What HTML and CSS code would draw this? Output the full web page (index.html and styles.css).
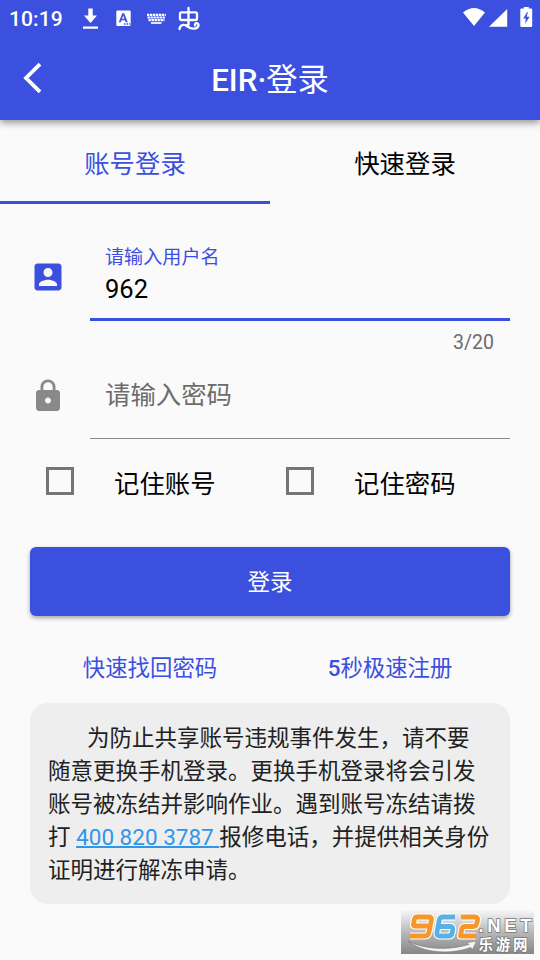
FILE: index.html
```html
<!DOCTYPE html>
<html lang="zh-CN">
<head>
<meta charset="utf-8">
<title>EIR·登录</title>
<link rel="stylesheet" href="styles.css">
</head>
<body>
<header class="header">
  <div class="status">
    <span class="clock">10:19</span>
    <svg class="status-left" width="126" height="36" viewBox="0 0 126 36" fill="#fff">
      <path d="M10.300 8.500h4.400v7h4.300l-6.500 7.500-6.500-7.500h4.300zM5 26.500h15v2.200H5z"/>
      <path fill-rule="evenodd" d="M39.500 10.500h12q1.200 0 1.200 1.200v13q0 1.200-1.200 1.200h-12q-1.200 0-1.200-1.200v-13q0-1.200 1.200-1.200zM44.300 13.200l-3.500 9h2l.7-2h3.500l.7 2h2l-3.500-9zm.9 2.400l1.200 3.200H44z"/>
      <path d="M46 23.300h1.500v1.500H46zM48.500 23.300h1.500v1.500h-1.500zM51 23.300h1.200v1.500H51z" fill="#3b50df"/>
      <path d="M69 14.800h18.800M69.500 17.500h17.800M70.500 20.200h16" fill="none" stroke="#fff" stroke-width="2.200" stroke-dasharray="2.400 .6"/>
      <path d="M73 23h10.500" stroke="#fff" stroke-width="1.700"/>
      <g fill="none" stroke="#fff" stroke-width="2.300" stroke-linecap="round" stroke-linejoin="round">
        <path d="M103.500 12.300h14q1.500 0 1.500 1.500v4.700q0 1.500-1.500 1.500h-14q-1.500 0-1.500-1.500v-4.700q0-1.500 1.500-1.500zM110.500 8v16.500"/>
        <path d="M101.500 29c.5-4 4-5.500 8-2.500 4.500 3.500 11 2.500 11-1.500 0-2.700-4-2.500-3.500.3M110.500 24.500l-2.500 1"/>
      </g>
    </svg>
    <svg class="status-right" width="72" height="36" viewBox="0 0 72 36" fill="#fff">
      <path d="M1 12.500Q12 3.500 23 12.500L12 26zM27 26.700L45.200 9v17.700z"/>
      <path fill-rule="evenodd" d="M59.500 8.500h2.300V7h5v1.500H69q1.200 0 1.200 1.200v16q0 1.200-1.200 1.200h-9.500q-1.200 0-1.200-1.200v-16q0-1.200 1.200-1.200zM65.200 12l-4 6.500h2.700l-.8 5.300 4.500-7h-2.900l1.200-4.800z"/>
    </svg>
  </div>
  <div class="appbar">
    <svg class="back" width="24" height="32" viewBox="0 0 24 32"><path d="M20 2.200L6 16l14 13.800" fill="none" stroke="#fff" stroke-width="3.800"/></svg>
    <h1 class="title">EIR·<span class="han">登录</span></h1>
  </div>
</header>
<nav class="tabs">
  <div class="tab active">账号登录</div>
  <div class="tab">快速登录</div>
</nav>
<main class="form">
  <div class="field user">
    <svg class="icon" width="36" height="36" viewBox="0 0 24 24" fill="#3b50df"><path d="M3 5v14c0 1.100.89 2 2 2h14c1.100 0 2-.9 2-2V5c0-1.100-.9-2-2-2H5c-1.110 0-2 .9-2 2zm12 4c0 1.660-1.340 3-3 3s-3-1.340-3-3 1.340-3 3-3 3 1.340 3 3zm-9 8c0-2 4-3.100 6-3.100s6 1.100 6 3.100v1H6v-1z"/></svg>
    <div class="input focused">
      <div class="label">请输入用户名</div>
      <div class="value">962</div>
    </div>
  </div>
  <div class="counter">3/20</div>
  <div class="field pass">
    <svg class="icon" width="36" height="36" viewBox="0 0 24 24" fill="#898989"><path d="M18 8h-1V6c0-2.760-2.240-5-5-5S7 3.240 7 6v2H6c-1.100 0-2 .9-2 2v10c0 1.100.9 2 2 2h12c1.100 0 2-.9 2-2V10c0-1.100-.9-2-2-2zm-6 9c-1.100 0-2-.9-2-2s.9-2 2-2 2 .9 2 2-.9 2-2 2zm3.100-9H8.900V6c0-1.710 1.390-3.100 3.100-3.100 1.710 0 3.100 1.390 3.100 3.100v2z"/></svg>
    <div class="input">
      <div class="placeholder">请输入密码</div>
    </div>
  </div>
  <div class="checks">
    <div class="check"><span class="box"></span><span>记住账号</span></div>
    <div class="check"><span class="box"></span><span>记住密码</span></div>
  </div>
  <div class="submit">登录</div>
  <div class="links">
    <div>快速找回密码</div>
    <div><span class="num">5</span>秒极速注册</div>
  </div>
  <div class="notice">为防止共享账号违规事件发生，请不要<br>随意更换手机登录。更换手机登录将会引发<br>账号被冻结并影响作业。遇到账号冻结请拨<br>打 <span class="phone">400 820 3787 </span>报修电话，并提供相关身份<br>证明进行解冻申请。</div>
</main>
<svg class="mark" width="133" height="44" viewBox="0 0 133 44">
  <defs>
    <linearGradient id="plate" x1="0" y1="0" x2="0" y2="1"><stop offset="0" stop-color="#f7f7f7"/><stop offset=".5" stop-color="#b9b9b9"/><stop offset="1" stop-color="#868686"/></linearGradient>
  </defs>
  <rect width="133" height="44" fill="url(#plate)"/>
  <path d="M7 31C22 39 46 41 68 34.500l-2-2 9.500-1.500-4 8.500-1.800-2C49 45 22 43 7 31z" fill="#f4f4f4" stroke="#777" stroke-width=".6"/>
  <g fill="none" stroke-linejoin="round">
    <g stroke="#fff" stroke-width="7">
      <path d="M28 16H14q-2 0-1.500-2l1-5q.5-2 2.500-2h12q3 0 2.500 2.500L28 22q-.7 4-4 4H9"/>
      <path d="M54 7H42q-3 0-3.700 3L36 22q-.7 4 2.500 4h9q3 0 3.500-2.500l.8-4q.4-3-2.500-3H38"/>
      <path d="M60 7h14q3 0 2.500 3l-.7 3.500q-.6 3-3.600 3h-8q-3 0-3.600 3L59.500 26H75"/>
    </g>
    <g stroke-width="4.800">
      <path stroke="#f7962a" d="M28 16H14q-2 0-1.500-2l1-5q.5-2 2.500-2h12q3 0 2.500 2.500L28 22q-.7 4-4 4H9"/>
      <path stroke="#58b0e5" d="M54 7H42q-3 0-3.700 3L36 22q-.7 4 2.500 4h9q3 0 3.500-2.500l.8-4q.4-3-2.500-3H38"/>
      <path stroke="#f7962a" d="M60 7h14q3 0 2.500 3l-.7 3.500q-.6 3-3.600 3h-8q-3 0-3.600 3L59.500 26H75"/>
    </g>
  </g>
  <text class="net" x="77.500" y="21.500" textLength="53">.NET</text>
  <text class="site" x="77.500" y="39.800" textLength="49">乐游网</text>
</svg>
</body>
</html>
```
FILE: styles.css
```css
* { box-sizing: border-box; }
body {
  margin: 0;
  width: 540px;
  height: 960px;
  position: relative;
  overflow: hidden;
  background: #fafafa;
  color: #000;
  font-family: Roboto, "Noto Sans CJK SC", sans-serif;
  font-size: 25.400px;
}
.header {
  height: 120px;
  background: #3b50df;
  color: #fff;
  box-shadow: 0 3px 7px rgba(0, 0, 0, .4);
}
.status { height: 36px; display: flex; }
.clock {
  width: 68px;
  margin-left: 9px;
  margin-right: 1px;
  font-size: 21px;
  font-weight: 500;
  line-height: 38px;
  letter-spacing: .1px;
}
.status-right { margin-left: auto; margin-right: 6px; }
.appbar {
  height: 84px;
  display: grid;
  grid-template-columns: 60px 1fr 60px;
  align-items: center;
}
.back { margin: 0 0 4px 20px; }
.title {
  margin: 0;
  text-align: center;
  font-size: 31.300px;
  font-weight: 500;
  line-height: 84px;
  padding-top: 3px;
}
.han { font-weight: 400; }
.tabs { display: flex; height: 84px; }
.tab {
  flex: 1;
  text-align: center;
  line-height: 88px;
}
.active { color: #3b50df; border-bottom: 3px solid #3b50df; }
.form { padding: 0 30px; }
.field { display: flex; }
.icon { margin-right: 24px; }
.input {
  flex: 1;
  padding-left: 15px;
  border-bottom: 1px solid #8a8a8a;
}
.user { height: 117px; }
.user .icon { margin-top: 55px; }
.focused { border-bottom: 3px solid #3b50df; }
.label {
  margin-top: 41px;
  height: 25px;
  line-height: 26px;
  font-size: 19.100px;
  color: #3b50df;
}
.value { font-size: 25.500px; line-height: 38px; }
.counter {
  height: 42px;
  padding-right: 16px;
  text-align: right;
  font-size: 19.500px;
  line-height: 44px;
  color: #6c6c6c;
}
.pass { height: 76px; }
.pass .icon { margin-top: 15px; }
.placeholder { line-height: 64px; color: #6c6c6c; }
.checks { display: flex; height: 84px; }
.check { flex: 1; display: flex; line-height: 90px; }
.box {
  width: 28px;
  height: 28px;
  margin: 28px 40px 0 16px;
  border: 3px solid #757575;
}
.submit {
  height: 69px;
  margin-top: 24px;
  border-radius: 6px;
  background: #3b50df;
  color: #fff;
  text-align: center;
  font-size: 22.500px;
  line-height: 70px;
  box-shadow: 0 2px 4px rgba(0, 0, 0, .35);
}
.links {
  display: flex;
  height: 87px;
  font-size: 22.400px;
  line-height: 104px;
  color: #3b50df;
}
.links > div { flex: 1; text-align: center; }
.num { font-weight: 500; }
.notice {
  height: 201px;
  padding: 19px 18px 17px;
  border-radius: 18px;
  background: #eee;
  color: #212121;
  font-size: 22.500px;
  line-height: 33px;
  text-indent: 39px;
  white-space: nowrap;
}
.phone {
  color: #2f96ea;
  text-decoration: underline;
  text-decoration-thickness: 1.500px;
}
.mark { position: absolute; left: 401px; top: 910px; }
.net, .site {
  fill: #fff;
  stroke: #777;
  stroke-width: 1.500px;
  paint-order: stroke;
  font-weight: 700;
}
.net { font-family: "Liberation Sans", sans-serif; font-size: 18.500px; }
.site { font-family: "Noto Sans CJK SC", sans-serif; font-size: 14.500px; }
```
